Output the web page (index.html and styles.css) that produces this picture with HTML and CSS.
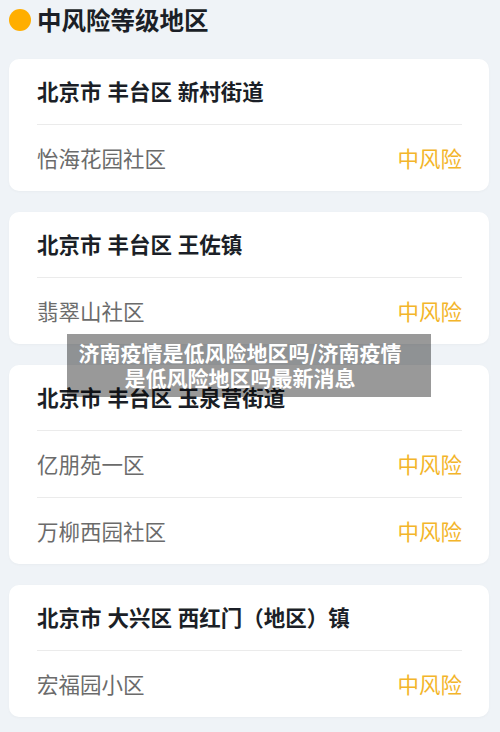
FILE: index.html
```html
<!DOCTYPE html>
<html lang="zh-CN">
<head>
<meta charset="utf-8">
<title>中风险等级地区</title>
<link rel="stylesheet" href="styles.css">
</head>
<body>
<div class="page">
  <div class="header">
    <span class="dot"></span>
    <h1 class="heading">中风险等级地区</h1>
  </div>

  <div class="card">
    <div class="card-title">北京市 丰台区 新村街道</div>
    <div class="row"><span class="name">怡海花园社区</span><span class="risk">中风险</span></div>
  </div>

  <div class="card">
    <div class="card-title">北京市 丰台区 王佐镇</div>
    <div class="row"><span class="name">翡翠山社区</span><span class="risk">中风险</span></div>
  </div>

  <div class="card">
    <div class="card-title">北京市 丰台区 玉泉营街道</div>
    <div class="row"><span class="name">亿朋苑一区</span><span class="risk">中风险</span></div>
    <div class="row"><span class="name">万柳西园社区</span><span class="risk">中风险</span></div>
  </div>

  <div class="card">
    <div class="card-title">北京市 大兴区 西红门（地区）镇</div>
    <div class="row"><span class="name">宏福园小区</span><span class="risk">中风险</span></div>
  </div>

  <div class="overlay">济南疫情是低风险地区吗/济南疫情<br>是低风险地区吗最新消息</div>
</div>
</body>
</html>
```

FILE: styles.css
```css
html, body {
  margin: 0;
  padding: 0;
  background: #eff3f7;
}
body {
  font-family: "Noto Sans CJK SC", "Noto Sans", sans-serif;
  width: 500px;
  height: 732px;
  overflow: hidden;
}
.page {
  position: relative;
  padding: 9px 11px 0 9px;
  display: flex;
  flex-direction: column;
  gap: 21px;
}
.header {
  display: flex;
  align-items: center;
  gap: 6px;
  height: 22px;
  margin-bottom: 7px;
}
.dot {
  width: 22px;
  height: 22px;
  border-radius: 50%;
  background: #ffae00;
  flex: none;
}
.heading {
  margin: 0;
  font-size: 24.5px;
  line-height: 30px;
  font-weight: 700;
  color: #1b1f27;
}
.card {
  background: #fff;
  border-radius: 10px;
  padding: 0 27px 0 28px;
  box-shadow: 0 1px 3px rgba(0, 0, 0, 0.03);
}
.card-title {
  padding: 17px 0 18px;
  font-size: 21.5px;
  line-height: 30px;
  font-weight: 700;
  color: #1b1f27;
  word-spacing: 1px;
}
.row {
  border-top: 1px solid #ebebeb;
  display: flex;
  justify-content: space-between;
  align-items: center;
  padding: 18px 0 18px;
  font-size: 21.5px;
  line-height: 30px;
}
.name {
  color: #6b6b6b;
}
.risk {
  color: #f3b52a;
}
.overlay {
  position: absolute;
  top: 334px;
  left: 67px;
  width: 364px;
  height: 63px;
  box-sizing: border-box;
  padding: 6px 18px 0 0;
  background: rgba(0, 0, 0, 0.4);
  color: #fff;
  text-align: center;
  font-size: 21px;
  line-height: 25px;
  font-weight: 700;
}
```
